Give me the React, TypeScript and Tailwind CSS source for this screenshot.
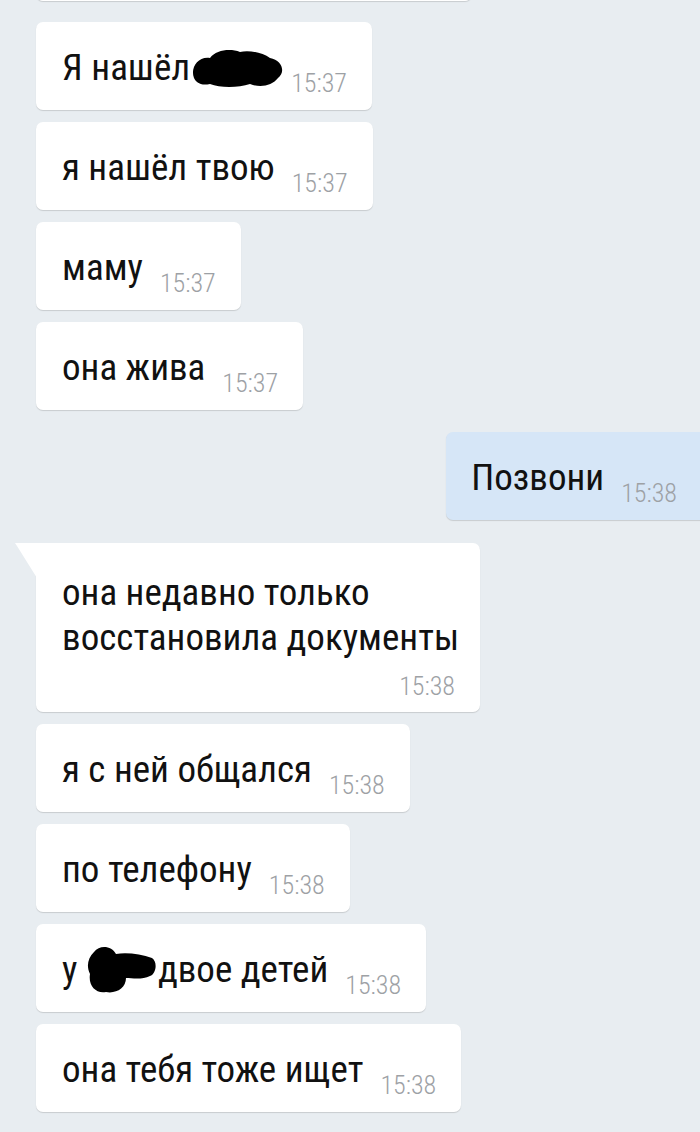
import type { ReactNode } from "react";

const font = "font-['Roboto_Condensed','Roboto',sans-serif]";

const NameBlot = () => (
  <svg width="94" height="40" viewBox="0 0 94 40" className="-mr-[10px] inline-block align-[-8px]">
    <path
      d="M4 30C0 20 8 8 20 10C26 2 40 0 50 4C58 2 72 4 80 10C92 12 96 24 88 30C82 38 70 40 60 36C48 40 30 40 20 36C10 38 6 34 4 30Z"
      fill="#000"
    />
  </svg>
);

const SmallBlot = () => (
  <svg width="70" height="50" viewBox="0 0 70 50" className="-my-[16px] mr-[2px] inline-block align-[4px]">
    <path
      d="M8 8C14 0 26 2 30 10C40 8 55 10 66 14C72 18 70 30 64 32C56 36 46 34 40 34C40 44 30 50 20 48C10 50 2 42 4 30C0 22 2 14 8 8Z"
      fill="#000"
    />
  </svg>
);

const Time = ({ children }: { children: ReactNode }) => (
  <span className="-mb-[6px] text-[26px] font-light leading-[26px] text-[#9da1a5]">{children}</span>
);

const Bubble = ({ children, time }: { children: ReactNode; time: string }) => (
  <div className="flex h-[88px] items-end gap-[17px] self-start rounded-[7px] bg-white pb-[20px] pl-[26px] pr-[25px] pt-[23px] shadow-[0_1px_1px_rgba(0,0,0,0.14)]">
    <span className="whitespace-nowrap text-[37px] leading-[45px] text-[#111]">{children}</span>
    <Time>{time}</Time>
  </div>
);

const App = () => {
  return (
    <div className={`${font} flex min-h-[1132px] flex-col overflow-hidden bg-[#e8edf1] pl-[36px]`}>
      <div className="-mt-[87px] h-[88px] w-[436px] rounded-[7px] bg-white shadow-[0_1px_1px_rgba(0,0,0,0.14)]" />

      <div className="mt-[21px] flex flex-col gap-[12px]">
        <Bubble time="15:37">
          Я нашёл
          <NameBlot />
        </Bubble>
        <Bubble time="15:37">я нашёл твою</Bubble>
        <Bubble time="15:37">маму</Bubble>
        <Bubble time="15:37">она жива</Bubble>
      </div>

      <div className="mt-[22px] -mr-[3px] flex h-[88px] items-end gap-[17px] self-end rounded-l-[7px] bg-[#d6e6f7] pb-[20px] pl-[25px] pr-[26px] pt-[23px] shadow-[0_1px_1px_rgba(0,0,0,0.14)]">
        <span className="text-[37px] leading-[45px] text-[#111]">Позвони</span>
        <Time>15:38</Time>
      </div>

      <div className="relative mt-[23px] flex w-[444px] flex-col rounded-[7px] rounded-tl-none bg-white pb-[13px] pl-[26px] pr-[25px] pt-[27px] shadow-[0_1px_1px_rgba(0,0,0,0.14)]">
        <svg width="22" height="35" viewBox="0 0 22 35" className="absolute -left-[21px] top-0">
          <path d="M0 0H22V35L2 3Q0 0 0 0Z" fill="#fff" />
        </svg>
        <span className="whitespace-nowrap text-[37px] leading-[45px] text-[#111]">
          она недавно только
          <br />
          восстановила документы
        </span>
        <span className="mt-[13px] self-end text-[26px] font-light leading-[26px] text-[#9da1a5]">15:38</span>
      </div>

      <div className="mt-[12px] flex flex-col gap-[12px]">
        <Bubble time="15:38">я с ней общался</Bubble>
        <Bubble time="15:38">по телефону</Bubble>
        <Bubble time="15:38">
          у <SmallBlot />
          двое детей
        </Bubble>
        <Bubble time="15:38">она тебя тоже ищет</Bubble>
      </div>
    </div>
  );
};

export default App;
